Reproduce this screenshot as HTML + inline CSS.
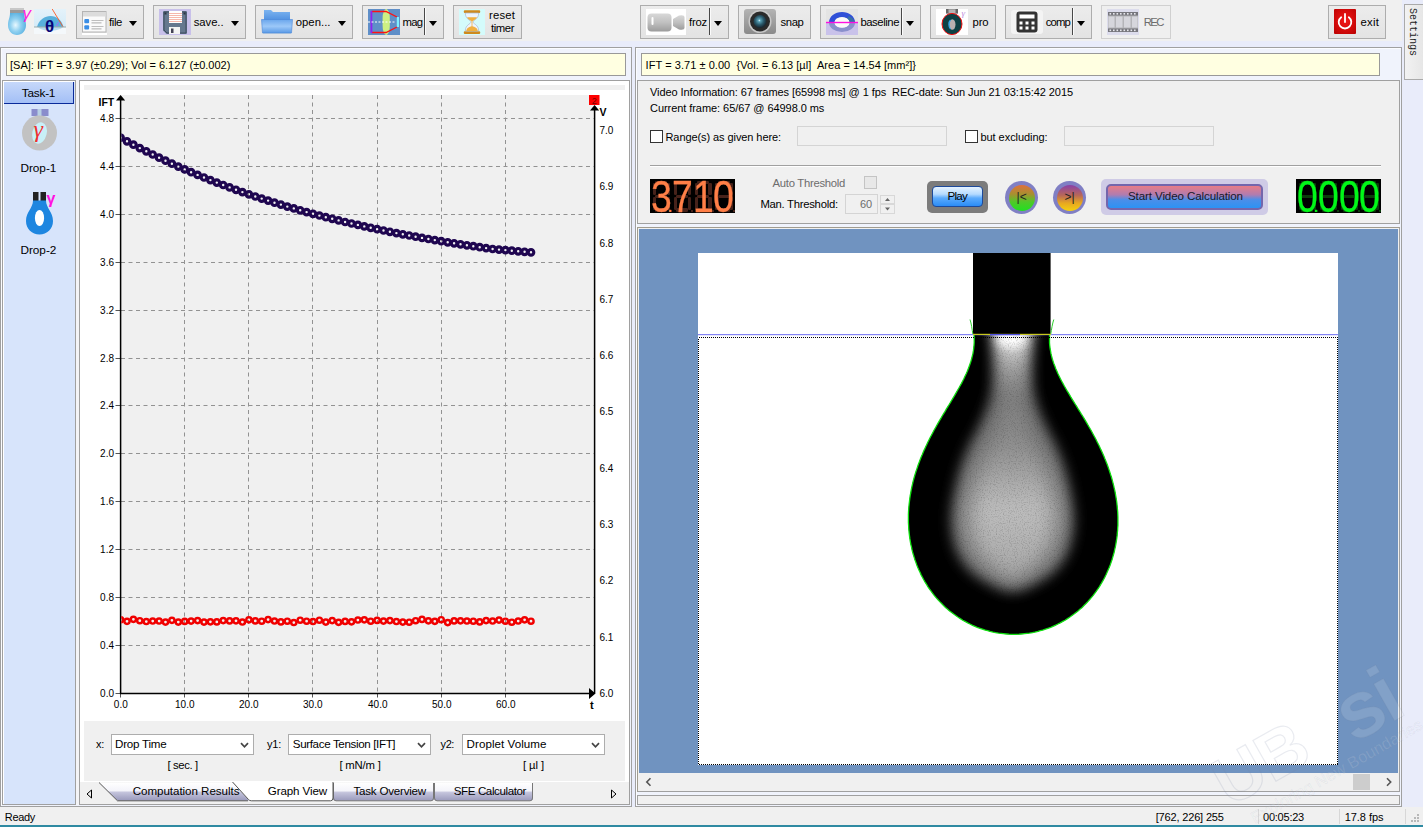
<!DOCTYPE html>
<html lang="en"><head><meta charset="utf-8"><title>Pendant Drop Analysis</title>
<style>
*{box-sizing:border-box;margin:0;padding:0}
html,body{width:1423px;height:827px;overflow:hidden}
body{position:relative;background:#e9ecfa;font-family:"Liberation Sans",sans-serif;font-size:11px;color:#000;line-height:1}
.abs{position:absolute}
.t{position:absolute;white-space:pre}
.tb{position:absolute;top:5px;height:34px;background:linear-gradient(#ececec,#e3e3e3);border:1px solid #adadad}
.tb.dis{border-color:#d0d0d0;background:#efefef}
.tb .lbl{position:absolute;top:10px;font-size:11.5px;line-height:13px;white-space:pre}
.arr{position:absolute;top:15px;width:0;height:0;border-left:4.8px solid transparent;border-right:4.8px solid transparent;border-top:5.3px solid #000}
.sep{position:absolute;top:2px;width:2px;height:27px;border-left:1px solid #484848;border-right:1px solid #fbfbfb}
.panel{position:absolute;border:1px solid #a0a0a0;}
.ybox{position:absolute;background:#ffffe1;border:1px solid #999}
.cb{position:absolute;height:21px;background:#fff;border:1px solid #adadad}
.cb span{position:absolute;left:4px;top:3px;font-size:11.5px;line-height:13px;white-space:pre}
.chk{position:absolute;width:13px;height:13px;background:#fff;border:1px solid #333}
.inp{position:absolute;background:#f0f0f0;border:1px solid #d4d4d4}
</style></head>
<body>
<div class="abs" style="left:0;top:0;width:1402px;height:41px;background:#f0f0f0"></div>
<svg class="abs" style="left:6px;top:6px" width="30" height="31" viewBox="0 0 30 31" >
<defs><radialGradient id="gd" cx="0.42" cy="0.55" r="0.6"><stop offset="0" stop-color="#e8f8ff"/><stop offset="0.5" stop-color="#8fd0f0"/><stop offset="1" stop-color="#58b0e0"/></radialGradient></defs>
<rect x="4" y="2" width="14" height="5" fill="#9a9a9a"/><rect x="4" y="2" width="14" height="2" fill="#c8c8c8"/>
<path d="M4 7 L18 7 C18 12 20 14 20 19 C20 25 16 29 11 29 C6 29 2 25 2 19 C2 14 4 12 4 7Z" fill="url(#gd)"/>
<text x="16.5" y="12.5" font-family="Liberation Sans,sans-serif" font-style="italic" font-size="17" fill="#ff20e0">γ</text>
</svg>
<svg class="abs" style="left:34px;top:8px" width="33" height="27" viewBox="0 0 33 27" >
<defs><linearGradient id="gt" x1="0" y1="0" x2="0" y2="1"><stop offset="0" stop-color="#e4f2fa"/><stop offset="1" stop-color="#cfe8f6"/></linearGradient></defs>
<rect x="0" y="1" width="32" height="25" fill="url(#gt)"/>
<path d="M3 19 C5 11.5 11 8 16.5 8 C23 8 27.5 12 29.5 19Z" fill="#58b0dc"/>
<rect x="0" y="19" width="32" height="7" fill="#f4f8fb"/>
<path d="M4 19 C8 24 24 24 29 19Z" fill="#b8dcee"/>
<rect x="0" y="18.5" width="32" height="1" fill="#9aa"/>
<line x1="18.2" y1="1" x2="28.8" y2="18.5" stroke="#ff5a20" stroke-width="0.9"/>
<path d="M23 18 C23 16 24 15 25 14" stroke="#b060ff" stroke-width="1" fill="none"/>
<text x="11" y="24.3" font-family="Liberation Sans,sans-serif" font-weight="bold" font-size="17" fill="#060678">θ</text>
</svg>
<div class="tb " style="left:76px;width:68px"><svg class="abs" style="left:5px;top:5px" width="26" height="24" viewBox="0 0 26 24" >
<rect x="0.5" y="0.5" width="23.5" height="20.5" fill="#fafafa" stroke="#b4b4b4"/>
<rect x="1" y="1" width="22.5" height="4.5" fill="#dcdcdc"/>
<rect x="2.3" y="8" width="4.8" height="4.2" rx="1" fill="#3a8ee6"/><rect x="2.3" y="14.3" width="4.8" height="4.2" rx="1" fill="#3a8ee6"/>
<rect x="9.5" y="9" width="12" height="0.8" fill="#b0b0b0"/><rect x="9.5" y="11.5" width="10" height="0.8" fill="#9a9a9a"/>
<rect x="9.5" y="15" width="12" height="0.8" fill="#b0b0b0"/><rect x="9.5" y="17.5" width="10" height="0.8" fill="#9a9a9a"/>
<rect x="0" y="22" width="25" height="2" fill="#fff"/>
</svg><i class="arr" style="left:52px"></i></div>
<div class="tb " style="left:153px;width:93px"><svg class="abs" style="left:5px;top:3px" width="33" height="27" viewBox="0 0 33 27" >
<rect x="0" y="0" width="32" height="26" fill="#c8c0ea"/>
<path d="M5 2 L27 2 Q28 2 28 3 L28 24 Q28 25 27 25 L7.5 25 L4 21.5 L4 3 Q4 2 5 2Z" fill="#66788e"/>
<path d="M5 3 L27 3 L27 24 L8 24 L5 21Z" fill="none" stroke="#3e4c5e" stroke-width="1"/>
<rect x="10" y="2" width="13" height="12" fill="#fff"/>
<g fill="#f6b8ac"><rect x="10" y="4" width="13" height="1"/><rect x="10" y="6" width="13" height="1"/><rect x="10" y="8" width="13" height="1"/><rect x="10" y="10" width="13" height="1"/><rect x="10" y="12" width="13" height="1"/></g>
<rect x="10" y="18" width="11" height="7" fill="#f4f4f4"/><rect x="12" y="19.5" width="2.5" height="4.5" fill="#445"/>
<rect x="5.5" y="3.5" width="2" height="2" fill="#2a3442"/><rect x="24.5" y="3.5" width="2" height="2" fill="#2a3442"/>
</svg><i class="arr" style="left:77px"></i></div>
<div class="tb " style="left:255px;width:98px"><svg class="abs" style="left:5px;top:3px" width="33" height="27" viewBox="0 0 33 27" >
<defs><linearGradient id="gf" x1="0" y1="0" x2="0" y2="1"><stop offset="0" stop-color="#7db4f0"/><stop offset="1" stop-color="#4c8ee0"/></linearGradient>
<linearGradient id="gf2" x1="0" y1="0" x2="0" y2="1"><stop offset="0" stop-color="#6aa6ec"/><stop offset="0.5" stop-color="#9cc8f8"/><stop offset="1" stop-color="#5a9ae6"/></linearGradient></defs>
<path d="M3 1 L10 1 L12 3 L29 3 L29 12 L3 12Z" fill="url(#gf)"/>
<path d="M0.5 10.5 L31.5 10.5 L30.5 24 L1.5 24Z" fill="url(#gf2)" stroke="#4a86d8" stroke-width="0.6"/>
<rect x="2" y="24" width="28" height="1" fill="#9ab8dc" opacity="0.7"/>
</svg><i class="arr" style="left:82px"></i></div>
<div class="tb " style="left:362px;width:82px"><svg class="abs" style="left:5px;top:3px" width="33" height="27" viewBox="0 0 33 27" >
<rect x="0" y="0" width="32" height="26" fill="#5f8fc8"/>
<rect x="14.6" y="0" width="7.2" height="26" rx="3.6" ry="9" fill="#cdf083"/>
<path d="M3.5 2.5 L18 2.5 L29 8 M3.5 23.5 L18 23.5 L29 18" stroke="#ff1010" stroke-width="1.3" fill="none"/>
<rect x="2.5" y="2" width="1.8" height="22" fill="#9020f0"/>
<rect x="28.8" y="8" width="2.2" height="10" fill="#80f0ff"/>
<line x1="0" y1="13" x2="28" y2="13" stroke="#fff" stroke-width="1" stroke-dasharray="2 1.5"/>
</svg><i class="sep" style="left:61px"></i><i class="arr" style="left:66px"></i></div>
<div class="tb " style="left:453px;width:69px"><svg class="abs" style="left:5px;top:3px" width="27" height="27" viewBox="0 0 27 27" >
<rect x="0" y="0" width="26" height="26" fill="#d4fbfb"/>
<rect x="4.8" y="1.3" width="16.4" height="2.6" rx="1" fill="#cf8a1c"/><rect x="4.8" y="22.3" width="16.4" height="2.6" rx="1" fill="#cf8a1c"/>
<path d="M6.3 4 L19.7 4 C19.7 10.5 14 11 14 13 C14 15 19.7 15.5 19.7 22 L6.3 22 C6.3 15.5 12 15 12 13 C12 11 6.3 10.5 6.3 4Z" fill="#eef4fb" stroke="#a8b8cc" stroke-width="0.7"/>
<path d="M8 8.2 L18 8.2 C17 10.5 14.5 11.5 13 12.3 C11.5 11.5 9 10.5 8 8.2Z" fill="#f0b040"/>
<path d="M7.3 22 C7.6 19 10 18 13 17.3 C16 18 18.4 19 18.7 22Z" fill="#f0b040"/>
<rect x="12.6" y="12" width="0.8" height="6" fill="#f0b040"/>
</svg></div>
<div class="tb " style="left:640px;width:89px"><svg class="abs" style="left:5px;top:3px" width="41" height="27" viewBox="0 0 41 27" >
<defs><linearGradient id="gc" x1="0" y1="0" x2="0" y2="1"><stop offset="0" stop-color="#d8d8d8"/><stop offset="0.5" stop-color="#c0c0c0"/><stop offset="1" stop-color="#9c9c9c"/></linearGradient></defs>
<rect x="0" y="0" width="40" height="26" fill="#fff"/>
<rect x="1.5" y="4.5" width="24" height="18" rx="4" fill="url(#gc)"/>
<path d="M27 10 L33 6.5 Q38.5 5.5 38.5 8 L38.5 19 Q38.5 21.5 33 20.5 L27 17Z" fill="url(#gc)"/>
<rect x="5.5" y="8" width="2" height="8" rx="1" fill="#fff"/>
</svg><i class="sep" style="left:68px"></i><i class="arr" style="left:73px"></i></div>
<div class="tb " style="left:738px;width:73px"><svg class="abs" style="left:5px;top:3px" width="33" height="27" viewBox="0 0 33 27" >
<defs><linearGradient id="gs" x1="0" y1="0" x2="0" y2="1"><stop offset="0" stop-color="#b4b4b4"/><stop offset="1" stop-color="#8a8a8a"/></linearGradient>
<radialGradient id="gl" cx="0.45" cy="0.42" r="0.55"><stop offset="0" stop-color="#d8f4fa"/><stop offset="0.18" stop-color="#5aa0b4"/><stop offset="0.6" stop-color="#2a5a6c"/><stop offset="1" stop-color="#1a2a34"/></radialGradient></defs>
<rect x="0" y="0" width="32" height="25" rx="3" fill="url(#gs)"/>
<circle cx="16" cy="12.5" r="11.5" fill="#c8c8c8"/>
<circle cx="16" cy="12.5" r="10" fill="#2a2a2a"/>
<circle cx="16" cy="12.5" r="6.5" fill="url(#gl)"/>
</svg></div>
<div class="tb " style="left:820px;width:101px"><svg class="abs" style="left:5px;top:3px" width="33" height="27" viewBox="0 0 33 27" >
<rect x="0" y="0" width="32" height="13" fill="#e4e4e4"/><rect x="0" y="13" width="32" height="13" fill="#c9c2ea"/>
<path d="M3 13.5 A13 10.5 0 0 1 29 13.5 L23.5 13.5 A7.5 5.5 0 0 0 8.5 13.5Z" fill="#3050d8"/>
<path d="M23 7 A13 10.5 0 0 1 29 13.5 L23.5 13.5 A7.5 5.5 0 0 0 21 9.5Z" fill="#3a70a8"/>
<path d="M3 13.5 A13 9.5 0 0 0 29 13.5 L23.5 13.5 A7.5 5 0 0 1 8.5 13.5Z" fill="#8a90cc"/>
<ellipse cx="16" cy="13.5" rx="7.5" ry="5.3" fill="#fafafa"/>
<rect x="0" y="12.8" width="32" height="1.4" fill="#ff10e0"/>
</svg><i class="sep" style="left:80px"></i><i class="arr" style="left:85px"></i></div>
<div class="tb " style="left:930px;width:66px"><svg class="abs" style="left:5px;top:3px" width="33" height="27" viewBox="0 0 33 27" >
<rect x="0" y="0" width="32" height="26" fill="#fff"/>
<rect x="10" y="0" width="12" height="4.6" fill="#666"/><rect x="12.5" y="0.3" width="7" height="4" fill="#b4b4b4"/>
<ellipse cx="16" cy="15" rx="10" ry="10.6" fill="#0c4044" stroke="#f01010" stroke-width="1"/>
<ellipse cx="16.3" cy="15.5" rx="3.2" ry="5.2" fill="#b8b0b0"/>
<path d="M14.5 11 A3.2 5.2 0 0 0 14.5 20" stroke="#30a8f0" stroke-width="1.2" fill="none"/>
<text x="25.5" y="7" font-family="Liberation Serif,serif" font-style="italic" font-size="9" fill="#c090e0">γ</text>
</svg></div>
<div class="tb " style="left:1005px;width:87px"><svg class="abs" style="left:5px;top:3px" width="33" height="27" viewBox="0 0 33 27" >
<rect x="0" y="1" width="32" height="24" rx="3" fill="#f4f4f4"/>
<rect x="5.5" y="2.5" width="21" height="21" rx="3" fill="#333"/>
<rect x="8.5" y="5.5" width="15" height="4" fill="#fff"/>
<g fill="#fff"><rect x="8.5" y="12.5" width="3" height="3"/><rect x="14.5" y="12.5" width="3" height="3"/><rect x="20.5" y="12.5" width="3" height="3"/>
<rect x="8.5" y="17.5" width="3" height="3"/><rect x="14.5" y="17.5" width="3" height="3"/><rect x="20.5" y="17.5" width="3" height="3"/></g>
</svg><i class="sep" style="left:66px"></i><i class="arr" style="left:71px"></i></div>
<div class="tb dis" style="left:1101px;width:70px"><svg class="abs" style="left:5px;top:3px" width="33" height="27" viewBox="0 0 33 27" >
<rect x="0" y="0" width="32" height="26" fill="#dcdcec"/>
<rect x="1" y="3" width="30" height="20" fill="#b4b4b8"/>
<rect x="1" y="3" width="30" height="3.5" fill="#77777d"/><rect x="1" y="19.5" width="30" height="3.5" fill="#77777d"/>
<g fill="#e8e8ee"><rect x="2.5" y="4" width="1.6" height="1.6"/><rect x="6" y="4" width="1.6" height="1.6"/><rect x="9.5" y="4" width="1.6" height="1.6"/><rect x="13" y="4" width="1.6" height="1.6"/><rect x="16.5" y="4" width="1.6" height="1.6"/><rect x="20" y="4" width="1.6" height="1.6"/><rect x="23.5" y="4" width="1.6" height="1.6"/><rect x="27" y="4" width="1.6" height="1.6"/>
<rect x="2.5" y="20.5" width="1.6" height="1.6"/><rect x="6" y="20.5" width="1.6" height="1.6"/><rect x="9.5" y="20.5" width="1.6" height="1.6"/><rect x="13" y="20.5" width="1.6" height="1.6"/><rect x="16.5" y="20.5" width="1.6" height="1.6"/><rect x="20" y="20.5" width="1.6" height="1.6"/><rect x="23.5" y="20.5" width="1.6" height="1.6"/><rect x="27" y="20.5" width="1.6" height="1.6"/></g>
<g fill="#d6d6dc"><rect x="1.5" y="7.5" width="6" height="11"/><rect x="9" y="7.5" width="6.5" height="11"/><rect x="17" y="7.5" width="6.5" height="11"/><rect x="25" y="7.5" width="5.5" height="11"/></g>
</svg></div>
<div class="tb " style="left:1328px;width:58px"><svg class="abs" style="left:5px;top:3px" width="23" height="26" viewBox="0 0 23 26" >
<defs><radialGradient id="ge" cx="0.5" cy="0.45" r="0.75"><stop offset="0" stop-color="#f41818"/><stop offset="1" stop-color="#b80000"/></radialGradient></defs>
<rect x="0" y="0" width="22" height="25" rx="1" fill="url(#ge)"/>
<path d="M7.2 8.2 A6.3 6.3 0 1 0 14.8 8.2" stroke="#fff" stroke-width="1.8" fill="none" stroke-linecap="round"/>
<line x1="11" y1="5" x2="11" y2="13" stroke="#fff" stroke-width="1.8" stroke-linecap="round"/>
</svg></div>
<div class="t" style="left:109.00px;top:15.28px;font-size:11.3px;line-height:14px;height:14px;letter-spacing:-0.361px">file</div>
<div class="t" style="left:193.80px;top:15.28px;font-size:11.3px;line-height:14px;height:14px;letter-spacing:-0.075px">save..</div>
<div class="t" style="left:295.70px;top:15.28px;font-size:11.3px;line-height:14px;height:14px;letter-spacing:0.035px">open...</div>
<div class="t" style="left:402.50px;top:15.28px;font-size:11.3px;line-height:14px;height:14px;letter-spacing:-0.694px">mag</div>
<div class="t" style="left:489.00px;top:8.28px;font-size:11.3px;line-height:14px;height:14px;letter-spacing:0.176px">reset</div>
<div class="t" style="left:491.00px;top:20.68px;font-size:11.3px;line-height:14px;height:14px;letter-spacing:-0.422px">timer</div>
<div class="t" style="left:689.00px;top:15.28px;font-size:11.3px;line-height:14px;height:14px;letter-spacing:-0.209px">froz</div>
<div class="t" style="left:780.60px;top:15.28px;font-size:11.3px;line-height:14px;height:14px;letter-spacing:-0.426px">snap</div>
<div class="t" style="left:860.40px;top:15.28px;font-size:11.3px;line-height:14px;height:14px;letter-spacing:-0.437px">baseline</div>
<div class="t" style="left:972.60px;top:15.28px;font-size:11.3px;line-height:14px;height:14px;letter-spacing:-0.144px">pro</div>
<div class="t" style="left:1045.80px;top:15.28px;font-size:11.3px;line-height:14px;height:14px;letter-spacing:-0.858px">comp</div>
<div class="t" style="left:1143.70px;top:15.28px;font-size:11.3px;line-height:14px;height:14px;letter-spacing:-1.519px;color:#6d6d6d">REC</div>
<div class="t" style="left:1360.50px;top:15.28px;font-size:11.3px;line-height:14px;height:14px;letter-spacing:0.229px">exit</div>
<div class="abs" style="left:1404px;top:4px;width:20px;height:76px;border:1px solid #aaa;border-right:none;background:linear-gradient(90deg,#f2f2f2,#e6e6e6)"></div>
<div class="abs" style="left:1404px;top:8px;width:16px;height:50px;writing-mode:vertical-rl;font-family:'Liberation Mono',monospace;font-size:10px;line-height:16px;color:#222;white-space:pre">Settings</div>
<div class="panel" style="left:0;top:47px;width:632px;height:760px;background:#f0f3fc;border-color:#a0a0a0;box-shadow:inset 1px 1px 0 #fbfcff"></div>
<div class="ybox" style="left:6px;top:53px;width:620px;height:23px"></div>
<div class="t" style="left:10.00px;top:58.89px;font-size:11px;line-height:13px;height:13px">[SA]: IFT = 3.97 (±0.29); Vol = 6.127 (±0.002)</div>
<div class="panel" style="left:2px;top:80px;width:74px;height:725px;background:#d7e4fb;border-color:#a0a0a0;box-shadow:inset 1px 1px 0 #fff"></div>
<div class="abs" style="left:4px;top:82px;width:70px;height:22px;background:linear-gradient(#c6d8fa,#a3bff6);border-right:1px solid #0a2a9a;border-bottom:1px solid #0a2a9a"></div>
<div class="t" style="left:21.80px;top:85.91px;font-size:11.8px;line-height:14px;height:14px;letter-spacing:-0.226px">Task-1</div>
<svg class="abs" style="left:18px;top:106px" width="44" height="50" viewBox="0 0 44 50" >
<rect x="13.5" y="3" width="17" height="7" fill="#8a8ccc"/><rect x="19.5" y="3" width="4" height="7" fill="#b8d0e4"/>
<circle cx="21.5" cy="27" r="17.5" fill="#c2c2c2"/>
<ellipse cx="21.5" cy="27" rx="7.2" ry="10.8" fill="#c8f0f8" transform="rotate(14 21.5 27)"/>
<text x="15.5" y="31" font-family="Liberation Serif,serif" font-style="italic" font-size="24" fill="#f03030">γ</text>
</svg>
<div class="t" style="left:20.50px;top:160.91px;font-size:11.8px;line-height:14px;height:14px;letter-spacing:-0.045px">Drop-1</div>
<svg class="abs" style="left:18px;top:188px" width="44" height="50" viewBox="0 0 44 50" >
<rect x="15" y="4" width="5.5" height="9" fill="#222"/><rect x="22.5" y="4" width="5.5" height="9" fill="#222"/>
<path d="M15 12.5 L28 12.5 C28 20 35 24 35 33 C35 41 29 46.5 21.5 46.5 C14 46.5 8 41 8 33 C8 24 15 20 15 12.5Z" fill="#1e86e0"/>
<ellipse cx="21.5" cy="30" rx="4.6" ry="8" fill="#fff"/>
<text x="28.5" y="16" font-family="Liberation Sans,sans-serif" font-weight="bold" font-size="16" fill="#ff10e0">γ</text>
</svg>
<div class="t" style="left:20.50px;top:243.11px;font-size:11.8px;line-height:14px;height:14px;letter-spacing:-0.045px">Drop-2</div>
<div class="abs" style="left:76px;top:80px;width:3px;height:725px;background:#f4f4f7"></div>
<div class="panel" style="left:79px;top:80px;width:551px;height:725px;background:#fff;border-color:#a0a0a0"></div>
<div class="abs" style="left:84px;top:85px;width:541px;height:5px;background:#f0f0f0"></div>
<svg class="abs" style="left:0;top:0" width="640" height="720" viewBox="0 0 640 720" font-family="Liberation Sans,sans-serif" font-size="10" fill="#000"><rect x="120" y="95" width="474.5" height="598.5" fill="#f0f0f0"/><path d="M121 645.5H594 M121 597.5H594 M121 549.5H594 M121 501.5H594 M121 453.5H594 M121 405.5H594 M121 358.5H594 M121 310.5H594 M121 262.5H594 M121 214.5H594 M121 166.5H594 M121 118.5H594 M184.5 95V693 M248.5 95V693 M312.5 95V693 M377.5 95V693 M441.5 95V693 M505.5 95V693" stroke="#929292" stroke-width="1" stroke-dasharray="4 3.5" fill="none"/><path d="M115.5 693.5H120 M115.5 645.5H120 M115.5 597.5H120 M115.5 549.5H120 M115.5 501.5H120 M115.5 453.5H120 M115.5 405.5H120 M115.5 358.5H120 M115.5 310.5H120 M115.5 262.5H120 M115.5 214.5H120 M115.5 166.5H120 M115.5 118.5H120 M120.5 693V697.5 M184.5 693V697.5 M248.5 693V697.5 M312.5 693V697.5 M377.5 693V697.5 M441.5 693V697.5 M505.5 693V697.5" stroke="#555" stroke-width="1" fill="none"/><path d="M120.6 98V693.6H592 M594.6 108V693.6" stroke="#000" stroke-width="1.5" fill="none"/><path d="M116 100.5L120.6 95L125.2 100.5Z M590 110.5L594.6 105L599.2 110.5Z M589 688L595.5 693.5L589 699Z" fill="#000"/><rect x="589" y="95" width="10.5" height="10" fill="#f00"/><text x="594.2" y="103.5" font-size="9" text-anchor="middle" fill="#700">2</text><text x="114" y="696.9" text-anchor="end">0.0</text><text x="114" y="648.9" text-anchor="end">0.4</text><text x="114" y="600.9" text-anchor="end">0.8</text><text x="114" y="552.9" text-anchor="end">1.2</text><text x="114" y="504.9" text-anchor="end">1.6</text><text x="114" y="456.9" text-anchor="end">2.0</text><text x="114" y="408.9" text-anchor="end">2.4</text><text x="114" y="361.9" text-anchor="end">2.8</text><text x="114" y="313.9" text-anchor="end">3.2</text><text x="114" y="265.9" text-anchor="end">3.6</text><text x="114" y="217.9" text-anchor="end">4.0</text><text x="114" y="169.9" text-anchor="end">4.4</text><text x="114" y="121.9" text-anchor="end">4.8</text><text x="120.8" y="708.4" text-anchor="middle">0.0</text><text x="184.8" y="708.4" text-anchor="middle">10.0</text><text x="248.8" y="708.4" text-anchor="middle">20.0</text><text x="312.8" y="708.4" text-anchor="middle">30.0</text><text x="377.8" y="708.4" text-anchor="middle">40.0</text><text x="441.8" y="708.4" text-anchor="middle">50.0</text><text x="505.8" y="708.4" text-anchor="middle">60.0</text><text x="599.5" y="696.9">6.0</text><text x="599.5" y="640.6">6.1</text><text x="599.5" y="584.3">6.2</text><text x="599.5" y="528.0">6.3</text><text x="599.5" y="471.7">6.4</text><text x="599.5" y="415.4">6.5</text><text x="599.5" y="359.1">6.6</text><text x="599.5" y="302.8">6.7</text><text x="599.5" y="246.5">6.8</text><text x="599.5" y="190.2">6.9</text><text x="599.5" y="133.9">7.0</text><text x="98.5" y="106" font-weight="bold" font-size="10.5">IFT</text><text x="599.5" y="115.5" font-weight="bold" font-size="10.5">V</text><text x="590" y="708.5" font-weight="bold" font-size="11">t</text><clipPath id="pc"><rect x="121.3" y="95" width="473" height="598"/></clipPath><g fill="none" stroke="#f00000" stroke-width="2.45" clip-path="url(#pc)"><circle cx="120.6" cy="619.8" r="2.6"/><circle cx="127.0" cy="621.3" r="2.6"/><circle cx="133.4" cy="619.3" r="2.6"/><circle cx="139.8" cy="620.7" r="2.6"/><circle cx="146.3" cy="621.5" r="2.6"/><circle cx="152.7" cy="621.0" r="2.6"/><circle cx="159.1" cy="621.0" r="2.6"/><circle cx="165.5" cy="622.1" r="2.6"/><circle cx="171.9" cy="620.3" r="2.6"/><circle cx="178.3" cy="622.1" r="2.6"/><circle cx="184.7" cy="621.4" r="2.6"/><circle cx="191.1" cy="621.1" r="2.6"/><circle cx="197.6" cy="620.6" r="2.6"/><circle cx="204.0" cy="622.1" r="2.6"/><circle cx="210.4" cy="621.8" r="2.6"/><circle cx="216.8" cy="621.9" r="2.6"/><circle cx="223.2" cy="620.6" r="2.6"/><circle cx="229.6" cy="620.9" r="2.6"/><circle cx="236.0" cy="620.8" r="2.6"/><circle cx="242.4" cy="622.0" r="2.6"/><circle cx="248.9" cy="619.8" r="2.6"/><circle cx="255.3" cy="620.9" r="2.6"/><circle cx="261.7" cy="621.2" r="2.6"/><circle cx="268.1" cy="619.6" r="2.6"/><circle cx="274.5" cy="621.0" r="2.6"/><circle cx="280.9" cy="621.9" r="2.6"/><circle cx="287.3" cy="621.2" r="2.6"/><circle cx="293.8" cy="622.5" r="2.6"/><circle cx="300.2" cy="620.2" r="2.6"/><circle cx="306.6" cy="621.2" r="2.6"/><circle cx="313.0" cy="621.5" r="2.6"/><circle cx="319.4" cy="620.2" r="2.6"/><circle cx="325.8" cy="622.1" r="2.6"/><circle cx="332.2" cy="620.6" r="2.6"/><circle cx="338.6" cy="622.3" r="2.6"/><circle cx="345.1" cy="621.4" r="2.6"/><circle cx="351.5" cy="621.8" r="2.6"/><circle cx="357.9" cy="620.0" r="2.6"/><circle cx="364.3" cy="619.8" r="2.6"/><circle cx="370.7" cy="621.2" r="2.6"/><circle cx="377.1" cy="620.4" r="2.6"/><circle cx="383.5" cy="621.1" r="2.6"/><circle cx="389.9" cy="620.6" r="2.6"/><circle cx="396.4" cy="621.5" r="2.6"/><circle cx="402.8" cy="622.1" r="2.6"/><circle cx="409.2" cy="622.2" r="2.6"/><circle cx="415.6" cy="620.7" r="2.6"/><circle cx="422.0" cy="619.4" r="2.6"/><circle cx="428.4" cy="620.8" r="2.6"/><circle cx="434.8" cy="621.3" r="2.6"/><circle cx="441.2" cy="619.7" r="2.6"/><circle cx="447.7" cy="622.6" r="2.6"/><circle cx="454.1" cy="620.9" r="2.6"/><circle cx="460.5" cy="620.8" r="2.6"/><circle cx="466.9" cy="621.0" r="2.6"/><circle cx="473.3" cy="621.2" r="2.6"/><circle cx="479.7" cy="621.9" r="2.6"/><circle cx="486.1" cy="620.6" r="2.6"/><circle cx="492.6" cy="621.0" r="2.6"/><circle cx="499.0" cy="620.1" r="2.6"/><circle cx="505.4" cy="621.2" r="2.6"/><circle cx="511.8" cy="622.2" r="2.6"/><circle cx="518.2" cy="621.0" r="2.6"/><circle cx="524.6" cy="619.8" r="2.6"/><circle cx="531.0" cy="621.2" r="2.6"/></g><g fill="none" stroke="#1f0650" stroke-width="3.15" clip-path="url(#pc)"><circle cx="120.6" cy="137.7" r="2.78"/><circle cx="127.0" cy="141.3" r="2.78"/><circle cx="133.4" cy="144.7" r="2.78"/><circle cx="139.8" cy="148.1" r="2.78"/><circle cx="146.3" cy="151.3" r="2.78"/><circle cx="152.7" cy="154.5" r="2.78"/><circle cx="159.1" cy="157.7" r="2.78"/><circle cx="165.5" cy="160.7" r="2.78"/><circle cx="171.9" cy="163.7" r="2.78"/><circle cx="178.3" cy="166.6" r="2.78"/><circle cx="184.7" cy="169.4" r="2.78"/><circle cx="191.1" cy="172.2" r="2.78"/><circle cx="197.6" cy="174.9" r="2.78"/><circle cx="204.0" cy="177.5" r="2.78"/><circle cx="210.4" cy="180.1" r="2.78"/><circle cx="216.8" cy="182.6" r="2.78"/><circle cx="223.2" cy="185.0" r="2.78"/><circle cx="229.6" cy="187.4" r="2.78"/><circle cx="236.0" cy="189.8" r="2.78"/><circle cx="242.4" cy="192.1" r="2.78"/><circle cx="248.9" cy="194.3" r="2.78"/><circle cx="255.3" cy="196.5" r="2.78"/><circle cx="261.7" cy="198.6" r="2.78"/><circle cx="268.1" cy="200.6" r="2.78"/><circle cx="274.5" cy="202.7" r="2.78"/><circle cx="280.9" cy="204.6" r="2.78"/><circle cx="287.3" cy="206.6" r="2.78"/><circle cx="293.8" cy="208.4" r="2.78"/><circle cx="300.2" cy="210.3" r="2.78"/><circle cx="306.6" cy="212.1" r="2.78"/><circle cx="313.0" cy="213.8" r="2.78"/><circle cx="319.4" cy="215.5" r="2.78"/><circle cx="325.8" cy="217.2" r="2.78"/><circle cx="332.2" cy="218.8" r="2.78"/><circle cx="338.6" cy="220.4" r="2.78"/><circle cx="345.1" cy="222.0" r="2.78"/><circle cx="351.5" cy="223.5" r="2.78"/><circle cx="357.9" cy="224.9" r="2.78"/><circle cx="364.3" cy="226.4" r="2.78"/><circle cx="370.7" cy="227.8" r="2.78"/><circle cx="377.1" cy="229.2" r="2.78"/><circle cx="383.5" cy="230.5" r="2.78"/><circle cx="389.9" cy="231.8" r="2.78"/><circle cx="396.4" cy="233.1" r="2.78"/><circle cx="402.8" cy="234.3" r="2.78"/><circle cx="409.2" cy="235.5" r="2.78"/><circle cx="415.6" cy="236.7" r="2.78"/><circle cx="422.0" cy="237.9" r="2.78"/><circle cx="428.4" cy="239.0" r="2.78"/><circle cx="434.8" cy="240.1" r="2.78"/><circle cx="441.2" cy="241.2" r="2.78"/><circle cx="447.7" cy="242.3" r="2.78"/><circle cx="454.1" cy="243.3" r="2.78"/><circle cx="460.5" cy="244.3" r="2.78"/><circle cx="466.9" cy="245.3" r="2.78"/><circle cx="473.3" cy="246.2" r="2.78"/><circle cx="479.7" cy="247.2" r="2.78"/><circle cx="486.1" cy="248.1" r="2.78"/><circle cx="492.6" cy="249.0" r="2.78"/><circle cx="499.0" cy="249.6" r="2.78"/><circle cx="505.4" cy="250.1" r="2.78"/><circle cx="511.8" cy="250.7" r="2.78"/><circle cx="518.2" cy="251.3" r="2.78"/><circle cx="524.6" cy="251.8" r="2.78"/><circle cx="531.0" cy="252.3" r="2.78"/></g></svg>
<div class="abs" style="left:84px;top:721px;width:541px;height:60px;background:#f0f0f0"></div>
<div class="abs" style="left:80px;top:782px;width:549px;height:22px;background:#f0f0f0"></div>
<div class="t" style="left:96.00px;top:738.29px;font-size:11px;line-height:13px;height:13px;letter-spacing:-0.278px">x:</div>
<div class="cb" style="left:111px;top:734px;width:143px"><svg class="abs" style="right:4px;top:7px" width="9" height="7" viewBox="0 0 9 7"><path d="M1 1.2L4.5 4.8L8 1.2" stroke="#444" stroke-width="1.7" fill="none"/></svg></div>
<div class="t" style="left:267.00px;top:738.29px;font-size:11px;line-height:13px;height:13px;letter-spacing:-0.225px">y1:</div>
<div class="cb" style="left:288px;top:734px;width:143px"><svg class="abs" style="right:4px;top:7px" width="9" height="7" viewBox="0 0 9 7"><path d="M1 1.2L4.5 4.8L8 1.2" stroke="#444" stroke-width="1.7" fill="none"/></svg></div>
<div class="t" style="left:440.60px;top:738.29px;font-size:11px;line-height:13px;height:13px;letter-spacing:-0.425px">y2:</div>
<div class="cb" style="left:462px;top:734px;width:143px"><svg class="abs" style="right:4px;top:7px" width="9" height="7" viewBox="0 0 9 7"><path d="M1 1.2L4.5 4.8L8 1.2" stroke="#444" stroke-width="1.7" fill="none"/></svg></div>
<div class="t" style="left:167.50px;top:758.08px;font-size:11.3px;line-height:14px;height:14px;letter-spacing:-0.385px">[ sec. ]</div>
<div class="t" style="left:339.40px;top:758.08px;font-size:11.3px;line-height:14px;height:14px;letter-spacing:-0.185px">[ mN/m ]</div>
<div class="t" style="left:523.00px;top:758.08px;font-size:11.3px;line-height:14px;height:14px;letter-spacing:-0.097px">[ µl ]</div>
<div class="t" style="left:115.00px;top:737.18px;font-size:11.6px;line-height:14px;height:14px;letter-spacing:-0.223px">Drop Time</div>
<div class="t" style="left:292.80px;top:737.18px;font-size:11.6px;line-height:14px;height:14px;letter-spacing:-0.359px">Surface Tension [IFT]</div>
<div class="t" style="left:466.60px;top:737.18px;font-size:11.6px;line-height:14px;height:14px;letter-spacing:0.049px">Droplet Volume</div>
<svg class="abs" style="left:0;top:0" width="640" height="827" viewBox="0 0 640 827">
<defs><linearGradient id="tg" x1="0" y1="0" x2="0" y2="1"><stop offset="0" stop-color="#ffffff"/><stop offset="0.45" stop-color="#f4f4fa"/><stop offset="0.55" stop-color="#c4c4dc"/><stop offset="1" stop-color="#9a9abc"/></linearGradient></defs>
<path d="M99 782.5 L117.5 800.5 L249 800.5 L232.5 782.5Z" fill="url(#tg)"/>
<path d="M99 782.5 L117.5 800.8 L248 800.8" stroke="#555" stroke-width="1" fill="none"/>
<path d="M333 782.5 V798 Q333 800.8 336 800.8 H431 Q434 800.8 434 798 V782.5Z" fill="url(#tg)"/>
<path d="M434 782.5 V798 Q434 800.8 437 800.8 H530 Q533 800.8 533 798 V782.5Z" fill="url(#tg)"/>
<path d="M333.5 783 V798 Q333.5 800.8 336 800.8 H431 Q433.5 800.8 433.5 798 V783 M434.5 783 V798 Q434.5 800.8 437 800.8 H530 Q532.5 800.8 532.5 798 V783" fill="none" stroke="#777" stroke-width="1"/>
<path d="M232.5 781 L248.5 799.5 Q249.5 800.8 251.5 800.8 L330.5 800.8 Q333 800.8 333 798 L333 781Z" fill="#fff"/>
<path d="M232.5 782 L248.5 799.5 Q249.5 800.8 251.5 800.8 L330.5 800.8 Q333 800.8 333 798 L333 782" fill="none" stroke="#555" stroke-width="1"/>
<path d="M91.5 790 L87 794 L91.5 798Z M611.5 790 L616 794 L611.5 798Z" fill="none" stroke="#000" stroke-width="1"/>
</svg>
<div class="t" style="left:132.70px;top:783.68px;font-size:11.6px;line-height:14px;height:14px;letter-spacing:-0.046px">Computation Results</div>
<div class="t" style="left:267.80px;top:783.68px;font-size:11.6px;line-height:14px;height:14px;letter-spacing:-0.120px">Graph View</div>
<div class="t" style="left:353.50px;top:783.68px;font-size:11.6px;line-height:14px;height:14px;letter-spacing:-0.224px">Task Overview</div>
<div class="t" style="left:453.80px;top:783.68px;font-size:11.6px;line-height:14px;height:14px;letter-spacing:-0.415px">SFE Calculator</div>
<div class="panel" style="left:635px;top:47px;width:767px;height:760px;background:#f0f3fc;border-color:#a0a0a0;box-shadow:inset 1px 1px 0 #fbfcff"></div>
<div class="ybox" style="left:641px;top:53px;width:738.5px;height:23px"></div>
<div class="t" style="left:645.60px;top:58.89px;font-size:11px;line-height:13px;height:13px;letter-spacing:0.052px">IFT = 3.71 ± 0.00  {Vol. = 6.13 [µl]  Area = 14.54 [mm²]}</div>
<div class="panel" style="left:637px;top:80px;width:763px;height:144px;background:#f0f0f0;border-color:#a0a0a0"></div>
<div class="t" style="left:650.00px;top:85.79px;font-size:11px;line-height:13px;height:13px;letter-spacing:-0.075px">Video Information: 67 frames [65998 ms] @ 1 fps  REC-date: Sun Jun 21 03:15:42 2015</div>
<div class="t" style="left:650.00px;top:102.49px;font-size:11px;line-height:13px;height:13px;letter-spacing:-0.059px">Current frame: 65/67 @ 64998.0 ms</div>
<div class="chk" style="left:650px;top:130px"></div>
<div class="t" style="left:665.50px;top:130.79px;font-size:11px;line-height:13px;height:13px;letter-spacing:-0.082px">Range(s) as given here:</div>
<div class="inp" style="left:797px;top:126px;width:150px;height:20px"></div>
<div class="chk" style="left:965px;top:130px"></div>
<div class="t" style="left:980.50px;top:130.79px;font-size:11px;line-height:13px;height:13px;letter-spacing:-0.056px">but excluding:</div>
<div class="inp" style="left:1064px;top:126px;width:150px;height:20px"></div>
<div class="abs" style="left:650px;top:165px;width:731px;height:2px;border-top:1px solid #a0a0a0;border-bottom:1px solid #fff"></div>
<div class="abs" style="left:650px;top:179px;width:85px;height:34px;background:#000;overflow:hidden"><i class="abs" style="left:5.3px;top:2.0px;width:12.1px;height:3.4px;background:#47221a;border-radius:1.2px"></i><i class="abs" style="left:5.3px;top:15.6px;width:12.1px;height:3.2px;background:#47221a;border-radius:1.2px"></i><i class="abs" style="left:5.3px;top:29.4px;width:12.1px;height:3.4px;background:#47221a;border-radius:1.2px"></i><i class="abs" style="left:2.7px;top:4.2px;width:3.4px;height:12.2px;background:#47221a;border-radius:1.2px"></i><i class="abs" style="left:16.6px;top:4.2px;width:3.4px;height:12.2px;background:#47221a;border-radius:1.2px"></i><i class="abs" style="left:2.7px;top:18.4px;width:3.4px;height:12.2px;background:#47221a;border-radius:1.2px"></i><i class="abs" style="left:16.6px;top:18.4px;width:3.4px;height:12.2px;background:#47221a;border-radius:1.2px"></i><i class="abs" style="left:20.1px;top:30.6px;width:2px;height:2px;background:#47221a"></i><i class="abs" style="left:26.2px;top:2.0px;width:12.1px;height:3.4px;background:#47221a;border-radius:1.2px"></i><i class="abs" style="left:26.2px;top:15.6px;width:12.1px;height:3.2px;background:#47221a;border-radius:1.2px"></i><i class="abs" style="left:26.2px;top:29.4px;width:12.1px;height:3.4px;background:#47221a;border-radius:1.2px"></i><i class="abs" style="left:23.6px;top:4.2px;width:3.4px;height:12.2px;background:#47221a;border-radius:1.2px"></i><i class="abs" style="left:37.5px;top:4.2px;width:3.4px;height:12.2px;background:#47221a;border-radius:1.2px"></i><i class="abs" style="left:23.6px;top:18.4px;width:3.4px;height:12.2px;background:#47221a;border-radius:1.2px"></i><i class="abs" style="left:37.5px;top:18.4px;width:3.4px;height:12.2px;background:#47221a;border-radius:1.2px"></i><i class="abs" style="left:41.0px;top:30.6px;width:2px;height:2px;background:#47221a"></i><i class="abs" style="left:47.1px;top:2.0px;width:12.1px;height:3.4px;background:#47221a;border-radius:1.2px"></i><i class="abs" style="left:47.1px;top:15.6px;width:12.1px;height:3.2px;background:#47221a;border-radius:1.2px"></i><i class="abs" style="left:47.1px;top:29.4px;width:12.1px;height:3.4px;background:#47221a;border-radius:1.2px"></i><i class="abs" style="left:44.5px;top:4.2px;width:3.4px;height:12.2px;background:#47221a;border-radius:1.2px"></i><i class="abs" style="left:58.4px;top:4.2px;width:3.4px;height:12.2px;background:#47221a;border-radius:1.2px"></i><i class="abs" style="left:44.5px;top:18.4px;width:3.4px;height:12.2px;background:#47221a;border-radius:1.2px"></i><i class="abs" style="left:58.4px;top:18.4px;width:3.4px;height:12.2px;background:#47221a;border-radius:1.2px"></i><i class="abs" style="left:61.9px;top:30.6px;width:2px;height:2px;background:#47221a"></i><i class="abs" style="left:68.0px;top:2.0px;width:12.1px;height:3.4px;background:#47221a;border-radius:1.2px"></i><i class="abs" style="left:68.0px;top:15.6px;width:12.1px;height:3.2px;background:#47221a;border-radius:1.2px"></i><i class="abs" style="left:68.0px;top:29.4px;width:12.1px;height:3.4px;background:#47221a;border-radius:1.2px"></i><i class="abs" style="left:65.4px;top:4.2px;width:3.4px;height:12.2px;background:#47221a;border-radius:1.2px"></i><i class="abs" style="left:79.3px;top:4.2px;width:3.4px;height:12.2px;background:#47221a;border-radius:1.2px"></i><i class="abs" style="left:65.4px;top:18.4px;width:3.4px;height:12.2px;background:#47221a;border-radius:1.2px"></i><i class="abs" style="left:79.3px;top:18.4px;width:3.4px;height:12.2px;background:#47221a;border-radius:1.2px"></i><i class="abs" style="left:82.8px;top:30.6px;width:2px;height:2px;background:#47221a"></i><span class="abs" style="left:-1.3px;top:-4.2px;width:25px;text-align:center;font-size:44.5px;line-height:44px;color:#ff7f47;-webkit-text-stroke:0.3px #ff7f47;transform:scaleX(0.84);transform-origin:50% 50%">3</span><span class="abs" style="left:18.1px;top:20.5px;font-size:14px;line-height:14px;font-weight:bold;color:#ff7f47">.</span><span class="abs" style="left:19.6px;top:-4.2px;width:25px;text-align:center;font-size:44.5px;line-height:44px;color:#ff7f47;-webkit-text-stroke:0.3px #ff7f47;transform:scaleX(0.84);transform-origin:50% 50%">7</span><span class="abs" style="left:40.5px;top:-4.2px;width:25px;text-align:center;font-size:44.5px;line-height:44px;color:#ff7f47;-webkit-text-stroke:0.3px #ff7f47;transform:scaleX(0.84);transform-origin:50% 50%">1</span><span class="abs" style="left:61.4px;top:-4.2px;width:25px;text-align:center;font-size:44.5px;line-height:44px;color:#ff7f47;-webkit-text-stroke:0.3px #ff7f47;transform:scaleX(0.84);transform-origin:50% 50%">0</span></div>
<div class="abs" style="left:1296px;top:179px;width:85px;height:34px;background:#000;overflow:hidden"><i class="abs" style="left:5.3px;top:2.0px;width:12.1px;height:3.4px;background:#0a3c0a;border-radius:1.2px"></i><i class="abs" style="left:5.3px;top:15.6px;width:12.1px;height:3.2px;background:#0a3c0a;border-radius:1.2px"></i><i class="abs" style="left:5.3px;top:29.4px;width:12.1px;height:3.4px;background:#0a3c0a;border-radius:1.2px"></i><i class="abs" style="left:2.7px;top:4.2px;width:3.4px;height:12.2px;background:#0a3c0a;border-radius:1.2px"></i><i class="abs" style="left:16.6px;top:4.2px;width:3.4px;height:12.2px;background:#0a3c0a;border-radius:1.2px"></i><i class="abs" style="left:2.7px;top:18.4px;width:3.4px;height:12.2px;background:#0a3c0a;border-radius:1.2px"></i><i class="abs" style="left:16.6px;top:18.4px;width:3.4px;height:12.2px;background:#0a3c0a;border-radius:1.2px"></i><i class="abs" style="left:20.1px;top:30.6px;width:2px;height:2px;background:#0a3c0a"></i><i class="abs" style="left:26.2px;top:2.0px;width:12.1px;height:3.4px;background:#0a3c0a;border-radius:1.2px"></i><i class="abs" style="left:26.2px;top:15.6px;width:12.1px;height:3.2px;background:#0a3c0a;border-radius:1.2px"></i><i class="abs" style="left:26.2px;top:29.4px;width:12.1px;height:3.4px;background:#0a3c0a;border-radius:1.2px"></i><i class="abs" style="left:23.6px;top:4.2px;width:3.4px;height:12.2px;background:#0a3c0a;border-radius:1.2px"></i><i class="abs" style="left:37.5px;top:4.2px;width:3.4px;height:12.2px;background:#0a3c0a;border-radius:1.2px"></i><i class="abs" style="left:23.6px;top:18.4px;width:3.4px;height:12.2px;background:#0a3c0a;border-radius:1.2px"></i><i class="abs" style="left:37.5px;top:18.4px;width:3.4px;height:12.2px;background:#0a3c0a;border-radius:1.2px"></i><i class="abs" style="left:41.0px;top:30.6px;width:2px;height:2px;background:#0a3c0a"></i><i class="abs" style="left:47.1px;top:2.0px;width:12.1px;height:3.4px;background:#0a3c0a;border-radius:1.2px"></i><i class="abs" style="left:47.1px;top:15.6px;width:12.1px;height:3.2px;background:#0a3c0a;border-radius:1.2px"></i><i class="abs" style="left:47.1px;top:29.4px;width:12.1px;height:3.4px;background:#0a3c0a;border-radius:1.2px"></i><i class="abs" style="left:44.5px;top:4.2px;width:3.4px;height:12.2px;background:#0a3c0a;border-radius:1.2px"></i><i class="abs" style="left:58.4px;top:4.2px;width:3.4px;height:12.2px;background:#0a3c0a;border-radius:1.2px"></i><i class="abs" style="left:44.5px;top:18.4px;width:3.4px;height:12.2px;background:#0a3c0a;border-radius:1.2px"></i><i class="abs" style="left:58.4px;top:18.4px;width:3.4px;height:12.2px;background:#0a3c0a;border-radius:1.2px"></i><i class="abs" style="left:61.9px;top:30.6px;width:2px;height:2px;background:#0a3c0a"></i><i class="abs" style="left:68.0px;top:2.0px;width:12.1px;height:3.4px;background:#0a3c0a;border-radius:1.2px"></i><i class="abs" style="left:68.0px;top:15.6px;width:12.1px;height:3.2px;background:#0a3c0a;border-radius:1.2px"></i><i class="abs" style="left:68.0px;top:29.4px;width:12.1px;height:3.4px;background:#0a3c0a;border-radius:1.2px"></i><i class="abs" style="left:65.4px;top:4.2px;width:3.4px;height:12.2px;background:#0a3c0a;border-radius:1.2px"></i><i class="abs" style="left:79.3px;top:4.2px;width:3.4px;height:12.2px;background:#0a3c0a;border-radius:1.2px"></i><i class="abs" style="left:65.4px;top:18.4px;width:3.4px;height:12.2px;background:#0a3c0a;border-radius:1.2px"></i><i class="abs" style="left:79.3px;top:18.4px;width:3.4px;height:12.2px;background:#0a3c0a;border-radius:1.2px"></i><i class="abs" style="left:82.8px;top:30.6px;width:2px;height:2px;background:#0a3c0a"></i><span class="abs" style="left:-1.3px;top:-4.2px;width:25px;text-align:center;font-size:44.5px;line-height:44px;color:#00f818;-webkit-text-stroke:0.3px #00f818;transform:scaleX(0.84);transform-origin:50% 50%">0</span><span class="abs" style="left:18.1px;top:20.5px;font-size:14px;line-height:14px;font-weight:bold;color:#00f818">.</span><span class="abs" style="left:19.6px;top:-4.2px;width:25px;text-align:center;font-size:44.5px;line-height:44px;color:#00f818;-webkit-text-stroke:0.3px #00f818;transform:scaleX(0.84);transform-origin:50% 50%">0</span><span class="abs" style="left:40.5px;top:-4.2px;width:25px;text-align:center;font-size:44.5px;line-height:44px;color:#00f818;-webkit-text-stroke:0.3px #00f818;transform:scaleX(0.84);transform-origin:50% 50%">0</span><span class="abs" style="left:61.4px;top:-4.2px;width:25px;text-align:center;font-size:44.5px;line-height:44px;color:#00f818;-webkit-text-stroke:0.3px #00f818;transform:scaleX(0.84);transform-origin:50% 50%">0</span></div>
<div class="t" style="left:772.60px;top:176.08px;font-size:11.3px;line-height:14px;height:14px;letter-spacing:-0.288px;color:#6d6d6d">Auto Threshold</div>
<div class="abs" style="left:864px;top:176px;width:13px;height:13px;background:#e8e8e8;border:1px solid #c4c4c4"></div>
<div class="t" style="left:760.40px;top:197.18px;font-size:11.3px;line-height:14px;height:14px;letter-spacing:-0.270px">Man. Threshold:</div>
<div class="inp" style="left:845px;top:194px;width:33px;height:20px"></div>
<div class="t" style="left:860.00px;top:197.79px;font-size:11px;line-height:13px;height:13px;letter-spacing:-0.118px;color:#6d6d6d">60</div>
<div class="abs" style="left:880px;top:195px;width:15px;height:9px;border:1px solid #d8d8d8;background:#f0f0f0"></div><div class="abs" style="left:880px;top:204px;width:15px;height:10px;border:1px solid #d8d8d8;background:#f0f0f0"></div>
<svg class="abs" style="left:880px;top:195px" width="15" height="19" viewBox="0 0 15 19"><path d="M5 6L7.5 3L10 6Z M5 12.5L7.5 15.5L10 12.5Z" fill="#666"/></svg>
<div class="abs" style="left:927px;top:181px;width:61px;height:32px;background:#7c7c7c;border-radius:5px"></div>
<div class="abs" style="left:932px;top:186px;width:51px;height:21px;border:1px solid #1c4a9c;border-radius:4px;background:linear-gradient(#e6f3ff,#b4daff 38%,#5cabfc 58%,#2a8cf6)"></div>
<div class="t" style="left:947.40px;top:188.78px;font-size:11.6px;line-height:14px;height:14px;letter-spacing:-0.741px">Play</div>
<div class="abs" style="left:1005px;top:181px;width:33px;height:33px;border-radius:50%;background:#807fc4"></div>
<div class="abs" style="left:1008.5px;top:184.5px;width:26px;height:26px;border-radius:50%;background:linear-gradient(#e0703c,#a89030 35%,#50c828 65%,#20e020)"></div>
<div class="t" style="left:1016.54px;top:190.14px;font-size:12px;line-height:14px;height:14px;color:#222">|&lt;</div>
<div class="abs" style="left:1053px;top:181px;width:33px;height:33px;border-radius:50%;background:#807fc4"></div>
<div class="abs" style="left:1056.5px;top:184.5px;width:26px;height:26px;border-radius:50%;background:linear-gradient(#8a40a8,#b86858 40%,#e8a820 70%,#f4d010)"></div>
<div class="t" style="left:1064.44px;top:190.14px;font-size:12px;line-height:14px;height:14px;color:#222">&gt;|</div>
<div class="abs" style="left:1101px;top:179px;width:167px;height:36px;background:#cfcbe6;border-radius:5px"></div>
<div class="abs" style="left:1106px;top:184px;width:157px;height:26px;border:2.5px solid #7466ac;border-radius:5px;background:linear-gradient(#e87c86,#b07cb0 40%,#4c8ee8 62%,#2c92f4)"></div>
<div class="t" style="left:1128.00px;top:189.08px;font-size:11.6px;line-height:14px;height:14px;letter-spacing:-0.121px;color:#181828">Start Video Calculation</div>
<div class="panel" style="left:637px;top:227px;width:763px;height:565px;background:#f0f0f0;border-color:#a09c90 #a0a0a0 #a0a0a0 #a09c90"></div>
<div class="abs" style="left:639px;top:229px;width:759px;height:544px;background:#7093c0"></div>
<div class="abs" style="left:698px;top:253px;width:640px;height:512px;background:#fff"></div>
<svg class="abs" style="left:0;top:0" width="1423" height="827" viewBox="0 0 1423 827"><defs>
<filter id="bl" x="-30%" y="-30%" width="160%" height="160%"><feGaussianBlur stdDeviation="6.5"/></filter>
<filter id="bl3" x="-40%" y="-40%" width="180%" height="180%"><feGaussianBlur stdDeviation="10"/></filter>
<filter id="bl2" x="-30%" y="-30%" width="160%" height="160%"><feGaussianBlur stdDeviation="4.5"/></filter>
<filter id="ns" x="0" y="0" width="100%" height="100%"><feTurbulence type="fractalNoise" baseFrequency="0.85" numOctaves="2" seed="3"/><feColorMatrix type="matrix" values="0.9 0 0 0 0.52  0.9 0 0 0 0.52  0.9 0 0 0 0.52  0 0 0 0 1"/></filter>
<clipPath id="dc"><path d="M974.0 334.3 L974.2 337.3 L974.2 339.8 L974.2 342.8 L974.0 345.3 L973.7 348.3 L973.4 350.7 L973.0 353.2 L972.3 356.1 L971.7 358.5 L970.9 361.4 L970.1 363.8 L969.3 366.1 L968.2 368.9 L967.3 371.2 L966.1 374.0 L965.0 376.2 L964.0 378.5 L962.6 381.2 L961.5 383.4 L960.0 386.0 L958.8 388.2 L957.3 390.8 L956.1 392.9 L954.8 395.1 L953.3 397.7 L952.0 399.8 L950.5 402.4 L949.2 404.5 L947.9 406.6 L946.3 409.2 L945.1 411.3 L943.5 413.9 L942.2 416.0 L941.0 418.2 L939.5 420.7 L938.2 422.9 L936.7 425.5 L935.5 427.7 L934.3 429.8 L932.9 432.5 L931.7 434.7 L930.3 437.3 L929.2 439.5 L927.8 442.2 L926.8 444.5 L925.7 446.7 L924.5 449.4 L923.4 451.7 L922.3 454.5 L921.3 456.8 L920.4 459.1 L919.3 461.9 L918.4 464.2 L917.5 467.0 L916.7 469.4 L915.9 471.8 L915.0 474.6 L914.3 477.0 L913.5 479.9 L912.9 482.3 L912.2 485.3 L911.7 487.7 L911.2 490.1 L910.7 493.1 L910.2 495.6 L909.8 498.5 L909.5 501.0 L909.2 503.5 L908.9 506.5 L908.7 508.9 L908.5 511.9 L908.4 514.4 L908.4 516.9 L908.4 519.9 L908.4 522.4 L908.6 525.4 L908.7 527.9 L908.9 530.4 L909.2 533.4 L909.5 535.9 L909.9 538.9 L910.3 541.3 L910.8 544.3 L911.4 546.7 L911.9 549.2 L912.6 552.1 L913.3 554.5 L914.2 557.4 L914.9 559.8 L915.8 562.1 L916.8 565.0 L917.7 567.3 L918.9 570.1 L920.0 572.3 L921.0 574.6 L922.4 577.3 L923.6 579.5 L925.1 582.1 L926.4 584.2 L928.0 586.8 L929.4 588.9 L930.9 590.9 L932.7 593.3 L934.2 595.3 L936.1 597.6 L937.8 599.5 L939.5 601.4 L941.6 603.5 L943.3 605.3 L945.5 607.4 L947.4 609.0 L949.3 610.7 L951.7 612.5 L953.7 614.1 L956.1 615.8 L958.2 617.3 L960.3 618.6 L962.8 620.2 L965.0 621.4 L967.7 622.9 L969.9 624.0 L972.6 625.3 L974.9 626.3 L977.2 627.3 L980.0 628.3 L982.4 629.1 L985.3 630.1 L987.7 630.7 L990.1 631.4 L993.0 632.1 L995.5 632.6 L998.4 633.1 L1000.9 633.4 L1003.4 633.7 L1006.4 634.0 L1008.9 634.2 L1011.9 634.3 L1014.0 634.3 L1014.0 634.3 L1014.0 634.3 L1016.1 634.3 L1019.1 634.2 L1021.6 634.0 L1024.6 633.7 L1027.1 633.4 L1029.5 633.1 L1032.5 632.6 L1034.9 632.1 L1037.9 631.4 L1040.3 630.7 L1042.7 630.1 L1045.5 629.1 L1047.9 628.3 L1050.7 627.3 L1053.0 626.3 L1055.2 625.3 L1057.9 624.0 L1060.2 622.9 L1062.8 621.4 L1065.0 620.2 L1067.5 618.6 L1069.6 617.3 L1071.6 615.8 L1074.0 614.1 L1076.0 612.5 L1078.3 610.7 L1080.2 609.0 L1082.1 607.4 L1084.2 605.3 L1086.0 603.5 L1088.0 601.4 L1089.7 599.5 L1091.3 597.6 L1093.2 595.3 L1094.7 593.3 L1096.5 590.9 L1097.9 588.9 L1099.3 586.8 L1100.9 584.2 L1102.1 582.1 L1103.6 579.5 L1104.8 577.3 L1106.1 574.6 L1107.1 572.3 L1108.1 570.1 L1109.3 567.3 L1110.2 565.0 L1111.2 562.1 L1112.0 559.8 L1112.7 557.4 L1113.5 554.5 L1114.2 552.1 L1114.8 549.2 L1115.4 546.7 L1115.8 544.3 L1116.3 541.3 L1116.7 538.9 L1117.1 535.9 L1117.3 533.4 L1117.6 530.4 L1117.7 527.9 L1117.9 525.4 L1117.9 522.4 L1117.9 519.9 L1117.9 516.9 L1117.8 514.4 L1117.7 511.9 L1117.4 508.9 L1117.2 506.5 L1116.9 503.5 L1116.6 501.0 L1116.2 498.5 L1115.7 495.6 L1115.3 493.1 L1114.7 490.1 L1114.1 487.7 L1113.6 485.3 L1112.8 482.3 L1112.2 479.9 L1111.4 477.0 L1110.6 474.6 L1109.7 471.8 L1108.9 469.4 L1108.1 467.0 L1107.1 464.2 L1106.2 461.9 L1105.0 459.1 L1104.1 456.8 L1103.1 454.5 L1101.9 451.7 L1100.8 449.4 L1099.6 446.7 L1098.5 444.5 L1097.3 442.2 L1096.0 439.5 L1094.8 437.3 L1093.4 434.7 L1092.2 432.5 L1090.7 429.8 L1089.5 427.7 L1088.2 425.5 L1086.7 422.9 L1085.4 420.7 L1083.9 418.2 L1082.6 416.0 L1081.2 413.9 L1079.7 411.3 L1078.3 409.2 L1076.8 406.6 L1075.4 404.5 L1074.1 402.4 L1072.5 399.8 L1071.2 397.7 L1069.7 395.1 L1068.4 392.9 L1067.1 390.8 L1065.6 388.2 L1064.3 386.0 L1062.9 383.4 L1061.7 381.2 L1060.3 378.5 L1059.2 376.2 L1058.1 374.0 L1056.9 371.2 L1055.9 368.9 L1054.8 366.1 L1053.9 363.8 L1053.1 361.4 L1052.2 358.5 L1051.6 356.1 L1050.9 353.2 L1050.5 350.7 L1050.1 348.3 L1049.7 345.3 L1049.5 342.8 L1049.5 339.8 L1049.5 337.3 L1049.6 334.3Z"/></clipPath>
<linearGradient id="hg1" x1="0" y1="335" x2="0" y2="590" gradientUnits="userSpaceOnUse"><stop offset="0" stop-color="#d0d0d0"/><stop offset="0.12" stop-color="#8a8a8a"/><stop offset="0.25" stop-color="#6a6a6a"/><stop offset="0.45" stop-color="#707070"/><stop offset="0.72" stop-color="#7c7c7c"/><stop offset="1" stop-color="#6a6a6a"/></linearGradient>
<linearGradient id="hg2" x1="0" y1="335" x2="0" y2="590" gradientUnits="userSpaceOnUse"><stop offset="0" stop-color="#ffffff"/><stop offset="0.09" stop-color="#c0c0c0"/><stop offset="0.22" stop-color="#848484"/><stop offset="0.42" stop-color="#8c8c8c"/><stop offset="0.68" stop-color="#bebebe"/><stop offset="1" stop-color="#a4a4a4"/></linearGradient>
</defs><rect x="973" y="253" width="77.6" height="82" fill="#000"/><path d="M974.0 334.3 L974.2 337.3 L974.2 339.8 L974.2 342.8 L974.0 345.3 L973.7 348.3 L973.4 350.7 L973.0 353.2 L972.3 356.1 L971.7 358.5 L970.9 361.4 L970.1 363.8 L969.3 366.1 L968.2 368.9 L967.3 371.2 L966.1 374.0 L965.0 376.2 L964.0 378.5 L962.6 381.2 L961.5 383.4 L960.0 386.0 L958.8 388.2 L957.3 390.8 L956.1 392.9 L954.8 395.1 L953.3 397.7 L952.0 399.8 L950.5 402.4 L949.2 404.5 L947.9 406.6 L946.3 409.2 L945.1 411.3 L943.5 413.9 L942.2 416.0 L941.0 418.2 L939.5 420.7 L938.2 422.9 L936.7 425.5 L935.5 427.7 L934.3 429.8 L932.9 432.5 L931.7 434.7 L930.3 437.3 L929.2 439.5 L927.8 442.2 L926.8 444.5 L925.7 446.7 L924.5 449.4 L923.4 451.7 L922.3 454.5 L921.3 456.8 L920.4 459.1 L919.3 461.9 L918.4 464.2 L917.5 467.0 L916.7 469.4 L915.9 471.8 L915.0 474.6 L914.3 477.0 L913.5 479.9 L912.9 482.3 L912.2 485.3 L911.7 487.7 L911.2 490.1 L910.7 493.1 L910.2 495.6 L909.8 498.5 L909.5 501.0 L909.2 503.5 L908.9 506.5 L908.7 508.9 L908.5 511.9 L908.4 514.4 L908.4 516.9 L908.4 519.9 L908.4 522.4 L908.6 525.4 L908.7 527.9 L908.9 530.4 L909.2 533.4 L909.5 535.9 L909.9 538.9 L910.3 541.3 L910.8 544.3 L911.4 546.7 L911.9 549.2 L912.6 552.1 L913.3 554.5 L914.2 557.4 L914.9 559.8 L915.8 562.1 L916.8 565.0 L917.7 567.3 L918.9 570.1 L920.0 572.3 L921.0 574.6 L922.4 577.3 L923.6 579.5 L925.1 582.1 L926.4 584.2 L928.0 586.8 L929.4 588.9 L930.9 590.9 L932.7 593.3 L934.2 595.3 L936.1 597.6 L937.8 599.5 L939.5 601.4 L941.6 603.5 L943.3 605.3 L945.5 607.4 L947.4 609.0 L949.3 610.7 L951.7 612.5 L953.7 614.1 L956.1 615.8 L958.2 617.3 L960.3 618.6 L962.8 620.2 L965.0 621.4 L967.7 622.9 L969.9 624.0 L972.6 625.3 L974.9 626.3 L977.2 627.3 L980.0 628.3 L982.4 629.1 L985.3 630.1 L987.7 630.7 L990.1 631.4 L993.0 632.1 L995.5 632.6 L998.4 633.1 L1000.9 633.4 L1003.4 633.7 L1006.4 634.0 L1008.9 634.2 L1011.9 634.3 L1014.0 634.3 L1014.0 634.3 L1014.0 634.3 L1016.1 634.3 L1019.1 634.2 L1021.6 634.0 L1024.6 633.7 L1027.1 633.4 L1029.5 633.1 L1032.5 632.6 L1034.9 632.1 L1037.9 631.4 L1040.3 630.7 L1042.7 630.1 L1045.5 629.1 L1047.9 628.3 L1050.7 627.3 L1053.0 626.3 L1055.2 625.3 L1057.9 624.0 L1060.2 622.9 L1062.8 621.4 L1065.0 620.2 L1067.5 618.6 L1069.6 617.3 L1071.6 615.8 L1074.0 614.1 L1076.0 612.5 L1078.3 610.7 L1080.2 609.0 L1082.1 607.4 L1084.2 605.3 L1086.0 603.5 L1088.0 601.4 L1089.7 599.5 L1091.3 597.6 L1093.2 595.3 L1094.7 593.3 L1096.5 590.9 L1097.9 588.9 L1099.3 586.8 L1100.9 584.2 L1102.1 582.1 L1103.6 579.5 L1104.8 577.3 L1106.1 574.6 L1107.1 572.3 L1108.1 570.1 L1109.3 567.3 L1110.2 565.0 L1111.2 562.1 L1112.0 559.8 L1112.7 557.4 L1113.5 554.5 L1114.2 552.1 L1114.8 549.2 L1115.4 546.7 L1115.8 544.3 L1116.3 541.3 L1116.7 538.9 L1117.1 535.9 L1117.3 533.4 L1117.6 530.4 L1117.7 527.9 L1117.9 525.4 L1117.9 522.4 L1117.9 519.9 L1117.9 516.9 L1117.8 514.4 L1117.7 511.9 L1117.4 508.9 L1117.2 506.5 L1116.9 503.5 L1116.6 501.0 L1116.2 498.5 L1115.7 495.6 L1115.3 493.1 L1114.7 490.1 L1114.1 487.7 L1113.6 485.3 L1112.8 482.3 L1112.2 479.9 L1111.4 477.0 L1110.6 474.6 L1109.7 471.8 L1108.9 469.4 L1108.1 467.0 L1107.1 464.2 L1106.2 461.9 L1105.0 459.1 L1104.1 456.8 L1103.1 454.5 L1101.9 451.7 L1100.8 449.4 L1099.6 446.7 L1098.5 444.5 L1097.3 442.2 L1096.0 439.5 L1094.8 437.3 L1093.4 434.7 L1092.2 432.5 L1090.7 429.8 L1089.5 427.7 L1088.2 425.5 L1086.7 422.9 L1085.4 420.7 L1083.9 418.2 L1082.6 416.0 L1081.2 413.9 L1079.7 411.3 L1078.3 409.2 L1076.8 406.6 L1075.4 404.5 L1074.1 402.4 L1072.5 399.8 L1071.2 397.7 L1069.7 395.1 L1068.4 392.9 L1067.1 390.8 L1065.6 388.2 L1064.3 386.0 L1062.9 383.4 L1061.7 381.2 L1060.3 378.5 L1059.2 376.2 L1058.1 374.0 L1056.9 371.2 L1055.9 368.9 L1054.8 366.1 L1053.9 363.8 L1053.1 361.4 L1052.2 358.5 L1051.6 356.1 L1050.9 353.2 L1050.5 350.7 L1050.1 348.3 L1049.7 345.3 L1049.5 342.8 L1049.5 339.8 L1049.5 337.3 L1049.6 334.3Z" fill="#000"/><g clip-path="url(#dc)" style="isolation:isolate"><rect x="900" y="330" width="230" height="310" fill="#000"/><path d="M993.5 318.0 C987.2 321.7 993.3 332.7 993.5 340.0 C993.7 347.3 994.7 353.3 994.5 362.0 C994.3 370.7 994.5 382.3 992.5 392.0 C990.5 401.7 986.7 410.3 982.5 420.0 C978.3 429.7 971.7 440.0 967.5 450.0 C963.3 460.0 960.2 468.7 957.5 480.0 C954.8 491.3 951.7 506.3 951.5 518.0 C951.3 529.7 953.2 541.0 956.5 550.0 C959.8 559.0 965.2 566.0 971.5 572.0 C977.8 578.0 988.3 582.8 994.5 586.0 C1000.7 589.2 1004.8 590.2 1008.5 591.0 C1012.2 591.8 1012.8 591.8 1016.5 591.0 C1020.2 590.2 1024.3 589.2 1030.5 586.0 C1036.7 582.8 1047.2 578.0 1053.5 572.0 C1059.8 566.0 1065.2 559.0 1068.5 550.0 C1071.8 541.0 1073.7 529.7 1073.5 518.0 C1073.3 506.3 1070.2 491.3 1067.5 480.0 C1064.8 468.7 1061.7 460.0 1057.5 450.0 C1053.3 440.0 1046.7 429.7 1042.5 420.0 C1038.3 410.3 1034.5 401.7 1032.5 392.0 C1030.5 382.3 1030.7 370.7 1030.5 362.0 C1030.3 353.3 1031.3 347.3 1031.5 340.0 C1031.7 332.7 1037.8 321.7 1031.5 318.0 C1025.2 314.3 999.8 314.3 993.5 318.0Z" fill="url(#hg1)" filter="url(#bl)"/><path d="M1002.5 318.0 C999.2 321.7 1002.3 332.7 1002.5 340.0 C1002.7 347.3 1003.5 353.3 1003.5 362.0 C1003.5 370.7 1003.5 382.3 1002.5 392.0 C1001.5 401.7 1000.3 410.3 997.5 420.0 C994.7 429.7 989.2 440.0 985.5 450.0 C981.8 460.0 978.2 468.7 975.5 480.0 C972.8 491.3 969.5 506.3 969.5 518.0 C969.5 529.7 971.7 541.3 975.5 550.0 C979.3 558.7 987.2 565.0 992.5 570.0 C997.8 575.0 1003.3 578.3 1007.5 580.0 C1011.7 581.7 1013.3 581.7 1017.5 580.0 C1021.7 578.3 1027.2 575.0 1032.5 570.0 C1037.8 565.0 1045.7 558.7 1049.5 550.0 C1053.3 541.3 1055.5 529.7 1055.5 518.0 C1055.5 506.3 1052.2 491.3 1049.5 480.0 C1046.8 468.7 1043.2 460.0 1039.5 450.0 C1035.8 440.0 1030.3 429.7 1027.5 420.0 C1024.7 410.3 1023.5 401.7 1022.5 392.0 C1021.5 382.3 1021.5 370.7 1021.5 362.0 C1021.5 353.3 1022.3 347.3 1022.5 340.0 C1022.7 332.7 1025.8 321.7 1022.5 318.0 C1019.2 314.3 1005.8 314.3 1002.5 318.0Z" fill="url(#hg2)" filter="url(#bl3)"/><ellipse cx="1011.5" cy="338" rx="14" ry="9" fill="#fff" filter="url(#bl2)"/><rect x="930" y="336" width="170" height="270" filter="url(#ns)" style="mix-blend-mode:multiply"/></g><path d="M974.0 334.3 L974.2 337.3 L974.2 339.8 L974.2 342.8 L974.0 345.3 L973.7 348.3 L973.4 350.7 L973.0 353.2 L972.3 356.1 L971.7 358.5 L970.9 361.4 L970.1 363.8 L969.3 366.1 L968.2 368.9 L967.3 371.2 L966.1 374.0 L965.0 376.2 L964.0 378.5 L962.6 381.2 L961.5 383.4 L960.0 386.0 L958.8 388.2 L957.3 390.8 L956.1 392.9 L954.8 395.1 L953.3 397.7 L952.0 399.8 L950.5 402.4 L949.2 404.5 L947.9 406.6 L946.3 409.2 L945.1 411.3 L943.5 413.9 L942.2 416.0 L941.0 418.2 L939.5 420.7 L938.2 422.9 L936.7 425.5 L935.5 427.7 L934.3 429.8 L932.9 432.5 L931.7 434.7 L930.3 437.3 L929.2 439.5 L927.8 442.2 L926.8 444.5 L925.7 446.7 L924.5 449.4 L923.4 451.7 L922.3 454.5 L921.3 456.8 L920.4 459.1 L919.3 461.9 L918.4 464.2 L917.5 467.0 L916.7 469.4 L915.9 471.8 L915.0 474.6 L914.3 477.0 L913.5 479.9 L912.9 482.3 L912.2 485.3 L911.7 487.7 L911.2 490.1 L910.7 493.1 L910.2 495.6 L909.8 498.5 L909.5 501.0 L909.2 503.5 L908.9 506.5 L908.7 508.9 L908.5 511.9 L908.4 514.4 L908.4 516.9 L908.4 519.9 L908.4 522.4 L908.6 525.4 L908.7 527.9 L908.9 530.4 L909.2 533.4 L909.5 535.9 L909.9 538.9 L910.3 541.3 L910.8 544.3 L911.4 546.7 L911.9 549.2 L912.6 552.1 L913.3 554.5 L914.2 557.4 L914.9 559.8 L915.8 562.1 L916.8 565.0 L917.7 567.3 L918.9 570.1 L920.0 572.3 L921.0 574.6 L922.4 577.3 L923.6 579.5 L925.1 582.1 L926.4 584.2 L928.0 586.8 L929.4 588.9 L930.9 590.9 L932.7 593.3 L934.2 595.3 L936.1 597.6 L937.8 599.5 L939.5 601.4 L941.6 603.5 L943.3 605.3 L945.5 607.4 L947.4 609.0 L949.3 610.7 L951.7 612.5 L953.7 614.1 L956.1 615.8 L958.2 617.3 L960.3 618.6 L962.8 620.2 L965.0 621.4 L967.7 622.9 L969.9 624.0 L972.6 625.3 L974.9 626.3 L977.2 627.3 L980.0 628.3 L982.4 629.1 L985.3 630.1 L987.7 630.7 L990.1 631.4 L993.0 632.1 L995.5 632.6 L998.4 633.1 L1000.9 633.4 L1003.4 633.7 L1006.4 634.0 L1008.9 634.2 L1011.9 634.3 L1014.0 634.3 L1014.0 634.3 L1014.0 634.3 L1016.1 634.3 L1019.1 634.2 L1021.6 634.0 L1024.6 633.7 L1027.1 633.4 L1029.5 633.1 L1032.5 632.6 L1034.9 632.1 L1037.9 631.4 L1040.3 630.7 L1042.7 630.1 L1045.5 629.1 L1047.9 628.3 L1050.7 627.3 L1053.0 626.3 L1055.2 625.3 L1057.9 624.0 L1060.2 622.9 L1062.8 621.4 L1065.0 620.2 L1067.5 618.6 L1069.6 617.3 L1071.6 615.8 L1074.0 614.1 L1076.0 612.5 L1078.3 610.7 L1080.2 609.0 L1082.1 607.4 L1084.2 605.3 L1086.0 603.5 L1088.0 601.4 L1089.7 599.5 L1091.3 597.6 L1093.2 595.3 L1094.7 593.3 L1096.5 590.9 L1097.9 588.9 L1099.3 586.8 L1100.9 584.2 L1102.1 582.1 L1103.6 579.5 L1104.8 577.3 L1106.1 574.6 L1107.1 572.3 L1108.1 570.1 L1109.3 567.3 L1110.2 565.0 L1111.2 562.1 L1112.0 559.8 L1112.7 557.4 L1113.5 554.5 L1114.2 552.1 L1114.8 549.2 L1115.4 546.7 L1115.8 544.3 L1116.3 541.3 L1116.7 538.9 L1117.1 535.9 L1117.3 533.4 L1117.6 530.4 L1117.7 527.9 L1117.9 525.4 L1117.9 522.4 L1117.9 519.9 L1117.9 516.9 L1117.8 514.4 L1117.7 511.9 L1117.4 508.9 L1117.2 506.5 L1116.9 503.5 L1116.6 501.0 L1116.2 498.5 L1115.7 495.6 L1115.3 493.1 L1114.7 490.1 L1114.1 487.7 L1113.6 485.3 L1112.8 482.3 L1112.2 479.9 L1111.4 477.0 L1110.6 474.6 L1109.7 471.8 L1108.9 469.4 L1108.1 467.0 L1107.1 464.2 L1106.2 461.9 L1105.0 459.1 L1104.1 456.8 L1103.1 454.5 L1101.9 451.7 L1100.8 449.4 L1099.6 446.7 L1098.5 444.5 L1097.3 442.2 L1096.0 439.5 L1094.8 437.3 L1093.4 434.7 L1092.2 432.5 L1090.7 429.8 L1089.5 427.7 L1088.2 425.5 L1086.7 422.9 L1085.4 420.7 L1083.9 418.2 L1082.6 416.0 L1081.2 413.9 L1079.7 411.3 L1078.3 409.2 L1076.8 406.6 L1075.4 404.5 L1074.1 402.4 L1072.5 399.8 L1071.2 397.7 L1069.7 395.1 L1068.4 392.9 L1067.1 390.8 L1065.6 388.2 L1064.3 386.0 L1062.9 383.4 L1061.7 381.2 L1060.3 378.5 L1059.2 376.2 L1058.1 374.0 L1056.9 371.2 L1055.9 368.9 L1054.8 366.1 L1053.9 363.8 L1053.1 361.4 L1052.2 358.5 L1051.6 356.1 L1050.9 353.2 L1050.5 350.7 L1050.1 348.3 L1049.7 345.3 L1049.5 342.8 L1049.5 339.8 L1049.5 337.3 L1049.6 334.3" fill="none" stroke="#10e010" stroke-width="1.3"/><path d="M973 335 C972 329 971.5 324 970 319.5 M1050.6 335 C1051.6 329 1052.3 324 1053.8 319.5" stroke="#30d030" stroke-width="1" fill="none"/><rect x="698" y="334" width="640" height="1.2" fill="#8484f4"/><rect x="973" y="333.8" width="78" height="1.2" fill="#c8c820"/><rect x="990" y="334" width="30" height="1.2" fill="#5050e0"/><path d="M698.5 337.5H1337.5V764.5H698.5Z" fill="none" stroke="#000" stroke-width="1" stroke-dasharray="1 1" shape-rendering="crispEdges"/></svg>
<div class="abs" style="left:639px;top:773px;width:759px;height:18px;background:#f0f0f0"></div>
<div class="abs" style="left:1353px;top:774px;width:17px;height:16px;background:#cdcdcd"></div>
<svg class="abs" style="left:639px;top:773px" width="759" height="18" viewBox="0 0 759 18"><path d="M11.5 5.3L7.8 9L11.5 12.7 M748 5.3L751.7 9L748 12.7" stroke="#555" stroke-width="1.6" fill="none"/></svg>
<div class="panel" style="left:637px;top:795px;width:763px;height:10px;background:#f0f0f0;border-color:#a0a0a0"></div>
<div class="abs" style="left:0;top:807px;width:1423px;height:18px;background:#f0f0f0"></div>
<div class="abs" style="left:0;top:825px;width:1423px;height:2px;background:#2f8aa2"></div>
<div class="t" style="left:4.80px;top:811.49px;font-size:11px;line-height:13px;height:13px;letter-spacing:-0.319px">Ready</div>
<div class="t" style="left:1155.70px;top:811.49px;font-size:11px;line-height:13px;height:13px;letter-spacing:-0.160px">[762, 226] 255</div>
<div class="t" style="left:1263.00px;top:811.49px;font-size:11px;line-height:13px;height:13px;letter-spacing:-0.227px">00:05:23</div>
<div class="t" style="left:1344.70px;top:811.49px;font-size:11px;line-height:13px;height:13px;letter-spacing:-0.055px">17.8 fps</div>
<div class="abs" style="left:1258px;top:809px;width:1px;height:15px;background:#d7d7d7"></div>
<div class="abs" style="left:1339px;top:809px;width:1px;height:15px;background:#d7d7d7"></div>
<div class="abs" style="left:1405px;top:809px;width:1px;height:15px;background:#d7d7d7"></div>
<svg class="abs" style="left:1409px;top:813px" width="12" height="12" viewBox="0 0 12 12" fill="#b8b8b8"><rect x="8" y="1" width="2" height="2"/><rect x="5" y="4" width="2" height="2"/><rect x="8" y="4" width="2" height="2"/><rect x="2" y="7" width="2" height="2"/><rect x="5" y="7" width="2" height="2"/><rect x="8" y="7" width="2" height="2"/></svg>
<svg class="abs" style="left:1180px;top:640px" width="243" height="187" viewBox="1180 640 243 187" font-family="Liberation Sans,sans-serif"><g fill="rgba(255,255,255,0.13)" stroke="rgba(110,120,150,0.12)" stroke-width="0.8"><text transform="translate(45 -17) rotate(-29.5 1313 787)" x="1322" y="762" font-size="80" font-weight="bold" letter-spacing="-3">si</text><text transform="translate(22 -22) rotate(-29.5 1313 787)" x="1200" y="772" font-size="68" font-weight="bold" fill="none" stroke="rgba(120,130,160,0.16)" stroke-width="1.2">UB</text><text transform="translate(18 -13) rotate(-29.5 1313 787)" x="1222" y="793" font-size="16.5" stroke-width="0.5">Exploring New Boundaries</text></g></svg>
</body></html>
